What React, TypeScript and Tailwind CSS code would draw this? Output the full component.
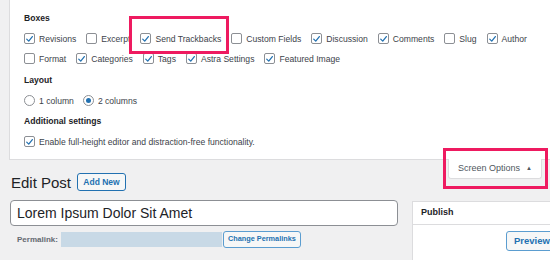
import React from "react";

const Check = ({ on = true }: { on?: boolean }) => (
  <span className="relative inline-flex h-[11px] w-[11px] shrink-0 items-center justify-center rounded-[2px] border border-[#8c8f94] bg-white">
    {on && (
      <svg viewBox="0 0 12 12" className="h-[10px] w-[10px]">
        <path d="M2.3 6.2 L5 8.8 L9.8 2.8" fill="none" stroke="#2271b1" strokeWidth="1.7" strokeLinecap="round" strokeLinejoin="round" />
      </svg>
    )}
  </span>
);

const Radio = ({ on = false }: { on?: boolean }) => (
  <span className="inline-flex h-[11px] w-[11px] shrink-0 items-center justify-center rounded-full border border-[#8c8f94] bg-white">
    {on && <span className="h-[5px] w-[5px] rounded-full bg-[#2271b1]" />}
  </span>
);

const Opt = ({ label, on = true }: { label: string; on?: boolean }) => (
  <label className="mr-[10px] flex items-center gap-[4px]">
    <Check on={on} />
    <span>{label}</span>
  </label>
);

const row1: [string, boolean][] = [
  ["Revisions", true],
  ["Excerpt", false],
  ["Send Trackbacks", true],
  ["Custom Fields", false],
  ["Discussion", true],
  ["Comments", true],
  ["Slug", false],
  ["Author", true],
];

const row2: [string, boolean][] = [
  ["Format", false],
  ["Categories", true],
  ["Tags", true],
  ["Astra Settings", true],
  ["Featured Image", true],
];

export default function App() {
  return (
    <div
      className="relative h-[260px] w-[550px] overflow-hidden bg-[#f0f0f1] text-[#3c434a]"
      style={{ fontFamily: '"Liberation Sans", Arial, sans-serif' }}
    >
      {/* screen options panel */}
      <div className="ml-[9px] border-b border-l border-[#dcdcde] bg-white pl-[14px] pt-[8px] pb-[7px] text-[8.6px]">
        <div className="flex h-[20px] items-center font-bold text-[#1d2327]">Boxes</div>
        <div className="mt-px flex h-[20px] items-center whitespace-nowrap">
          {row1.map(([l, on]) => (
            <Opt key={l} label={l} on={on} />
          ))}
        </div>
        <div className="flex h-[20px] items-center whitespace-nowrap">
          {row2.map(([l, on]) => (
            <Opt key={l} label={l} on={on} />
          ))}
        </div>
        <div className="mt-px flex h-[20px] items-center font-bold text-[#1d2327]">Layout</div>
        <div className="mt-px flex h-[20px] items-center">
          <label className="mr-[9px] flex items-center gap-[4px]">
            <Radio />
            <span>1 column</span>
          </label>
          <label className="flex items-center gap-[4px]">
            <Radio on />
            <span>2 columns</span>
          </label>
        </div>
        <div className="flex h-[20px] items-center font-bold text-[#1d2327]">Additional settings</div>
        <div className="mt-px flex h-[20px] items-center">
          <Opt label="Enable full-height editor and distraction-free functionality." />
        </div>
      </div>

      <div className="relative pl-[10px] pt-[13px]">
        {/* screen options tab */}
        <div className="absolute -top-px right-[8px] flex h-[20px] w-[94px] items-center justify-center gap-[6px] rounded-b-[3px] border border-t-0 border-[#dcdcde] bg-white text-[9px] text-[#50575e]">
          <span>Screen Options</span>
          <span className="text-[6px]">▲</span>
        </div>

        <div className="flex h-[18px] items-center">
          <h1 className="pl-px text-[15px] leading-none text-[#1d2327]">Edit Post</h1>
          <button className="ml-[6px] flex h-[18px] w-[49px] items-center justify-center rounded-[3px] border border-[#2271b1] bg-[#f6f7f7] text-[8.5px] font-bold text-[#2271b1]">
            Add New
          </button>
        </div>

        <div className="mt-[9px] flex items-start">
          <div className="w-[388px] shrink-0">
            <div className="flex h-[26px] items-center rounded-[4px] border border-[#8c8f94] bg-white pl-[6px] text-[14px] text-[#1d2327]">
              Lorem Ipsum Dolor Sit Amet
            </div>
            <div className="mt-[5px] flex h-[17px] items-center pl-[7px]">
              <span className="text-[8px] font-bold text-[#646970]">Permalink:</span>
              <span className="ml-[3px] h-[15px] w-[161px] bg-[#c8d9e6] blur-[0.6px]" />
              <button className="ml-px flex h-[17px] w-[78px] items-center justify-center rounded-[3px] border border-[#5b9dd0] bg-[#f6f7f7] text-[7.3px] font-bold text-[#2271b1]">
                Change Permalinks
              </button>
            </div>
          </div>
          <div className="ml-[14px] mt-px w-[200px] shrink-0 border border-[#dcdcde] bg-white">
            <div className="flex h-[23px] items-center border-b border-[#dcdcde] pl-[8px] text-[9px] font-bold text-[#1d2327]">
              Publish
            </div>
            <div className="h-[60px] pl-[93px] pt-[6px]">
              <button className="flex h-[20px] w-[90px] items-center whitespace-nowrap rounded-[3px] border border-[#5b9dd0] bg-[#f6f7f7] pl-[7px] text-[9.5px] font-bold text-[#2271b1]">
                Preview Changes
              </button>
            </div>
          </div>
        </div>
      </div>

      {/* highlight boxes */}
      <div className="absolute left-[129px] top-[16px] h-[38px] w-[100px] border-[3px] border-[#ee1a60]" />
      <div className="absolute left-[443px] top-[148px] h-[41px] w-[105px] border-[3px] border-[#ee1a60]" />
    </div>
  );
}
